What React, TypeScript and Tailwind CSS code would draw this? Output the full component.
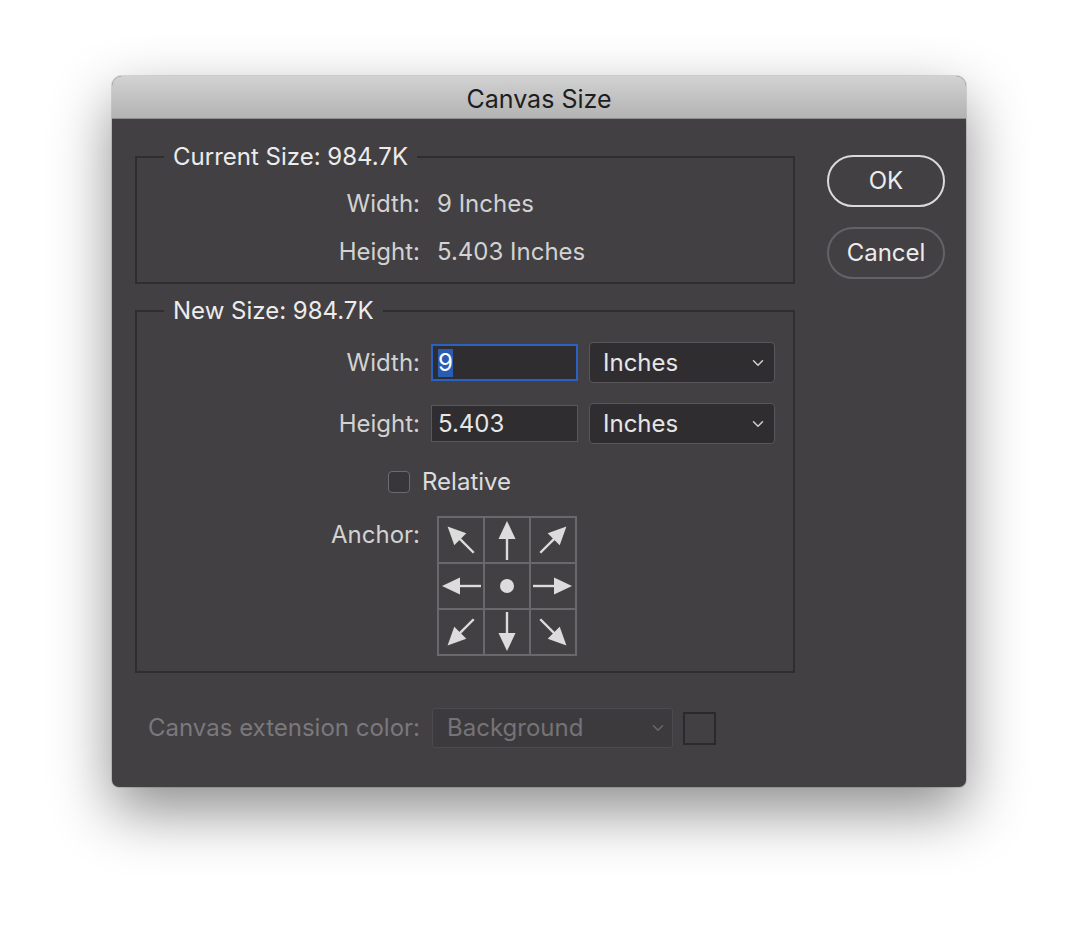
import React from "react";

// Photoshop "Canvas Size" dialog, dark theme, on a white page.

const FONT = { fontFamily: "Inter, 'Noto Sans', sans-serif" };

function Chevron({ color = "#d0d0d0" }: { color?: string }) {
  return (
    <svg width="12" height="8" viewBox="0 0 12 8" fill="none">
      <path d="M1.5 1.8 6 6.2l4.5-4.4" stroke={color} strokeWidth="1.5" strokeLinecap="round" strokeLinejoin="round" />
    </svg>
  );
}

function UnitSelect() {
  return (
    <div className="flex h-[41px] w-[186px] items-center justify-between rounded-[4px] border border-[#58565a] bg-[#2f2d30] pl-[13px] pr-[10px] text-[24px] text-[#e6e6e6]">
      <span>Inches</span>
      <Chevron />
    </div>
  );
}

// one anchor cell: an "up" arrow rotated by deg, or the centre dot
function AnchorCell({ deg }: { deg: number | null }) {
  return (
    <div className="flex h-[44px] w-[44px] items-center justify-center bg-[#424043]">
      <svg width="44" height="44" viewBox="0 0 44 44">
        {deg === null ? (
          <circle cx="22" cy="22" r="7" fill="#dcdcdc" />
        ) : (
          <g transform={`rotate(${deg} 22 22)`}>
            <line x1="22" y1="20" x2="22" y2={deg % 90 === 0 ? 42 : 40} stroke="#dcdcdc" strokeWidth="2.4" />
            <polygon points="22,3 13.5,21 30.5,21" fill="#dcdcdc" />
          </g>
        )}
      </svg>
    </div>
  );
}

export default function App() {
  const anchors: (number | null)[] = [-45, 0, 45, -90, null, 90, -135, 180, 135];

  return (
    <div className="min-h-screen bg-white pl-[112px] pt-[76px]" style={FONT}>
      <div className="w-[854px] overflow-hidden rounded-t-[10px] rounded-b-[7px] bg-[#424043] shadow-[0_24px_60px_rgba(0,0,0,0.45),0_0_0_1px_rgba(0,0,0,0.12)]">
        {/* title bar */}
        <div className="flex h-[43px] items-center justify-center border-b border-[#8c8c8c] bg-gradient-to-b from-[#d2d2d2] to-[#b3b3b3] pt-[5px] text-[25px] text-[#1e1e1e]">
          Canvas Size
        </div>

        <div className="flex pl-[23px] pr-[21px]">
          {/* left column */}
          <div className="w-[660px]">
            <fieldset className="mt-[25px] border-2 border-[#2e2d30] pb-[15px]">
              <legend className="ml-[27px] px-[9px] text-[24px] leading-[26px] text-[#ececec]">Current Size: 984.7K</legend>
              <div className="mt-[19px] flex h-[30px] items-center text-[24px] text-[#d2d2d2]">
                <span className="w-[283px] text-right">Width:</span>
                <span className="ml-[17px]">9 Inches</span>
              </div>
              <div className="mt-[18px] flex h-[30px] items-center text-[24px] text-[#d2d2d2]">
                <span className="w-[283px] text-right">Height:</span>
                <span className="ml-[17px]">5.403 Inches</span>
              </div>
            </fieldset>

            <fieldset className="mt-[14px] border-2 border-[#2e2d30] pb-[15px]">
              <legend className="ml-[27px] px-[9px] text-[24px] leading-[26px] text-[#ececec]">New Size: 984.7K</legend>
              <div className="mt-[18px] flex items-center text-[24px] text-[#d2d2d2]">
                <span className="w-[283px] text-right">Width:</span>
                <div className="ml-[11px] flex h-[37px] w-[147px] items-center border-2 border-[#2a62c4] bg-[#2f2d30] pl-[5px]">
                  <span className="bg-[#2a5cb6] leading-[28px] text-white">9</span>
                </div>
                <div className="ml-[11px]">
                  <UnitSelect />
                </div>
              </div>
              <div className="mt-[20px] flex items-center text-[24px] text-[#d2d2d2]">
                <span className="w-[283px] text-right">Height:</span>
                <div className="ml-[11px] flex h-[37px] w-[147px] items-center border border-[#5a585c] bg-[#2f2d30] pl-[6px] text-[#e6e6e6]">
                  5.403
                </div>
                <div className="ml-[11px]">
                  <UnitSelect />
                </div>
              </div>
              <div className="mt-[20px] flex items-center text-[24px] text-[#dcdcdc]">
                <span className="ml-[251px] h-[22px] w-[22px] rounded-[4px] border border-[#6c6a6e] bg-[#38363a]" />
                <span className="ml-[12px]">Relative</span>
              </div>
              <div className="mt-[16px] flex items-start text-[24px] text-[#d2d2d2]">
                <span className="mt-[1px] w-[283px] text-right">Anchor:</span>
                <div className="ml-[17px] grid grid-cols-3 gap-[2px] bg-[#6a686c] p-[2px]">
                  {anchors.map((d, i) => (
                    <AnchorCell key={i} deg={d} />
                  ))}
                </div>
              </div>
            </fieldset>

            <div className="mt-[35px] mb-[39px] flex items-center text-[24px]">
              <span className="w-[285px] text-right text-[#7a787c]">Canvas extension color:</span>
              <div className="ml-[12px] flex h-[40px] w-[241px] items-center justify-between rounded-[3px] border border-[#4c4a4e] bg-[#3c3a3d] pl-[14px] pr-[8px] text-[#757377]">
                <span>Background</span>
                <Chevron color="#6a686c" />
              </div>
              <span className="ml-[10px] h-[33px] w-[33px] border-2 border-[#2a292c]" />
            </div>
          </div>

          {/* buttons */}
          <div className="ml-[32px] flex flex-col gap-[20px] pt-[36px]">
            <div className="flex h-[52px] w-[118px] items-center justify-center rounded-full border-2 border-[#dadada] text-[24px] text-[#ececec]">
              OK
            </div>
            <div className="flex h-[52px] w-[118px] items-center justify-center rounded-full border-2 border-[#646266] text-[24px] text-[#ececec]">
              Cancel
            </div>
          </div>
        </div>
      </div>
    </div>
  );
}
